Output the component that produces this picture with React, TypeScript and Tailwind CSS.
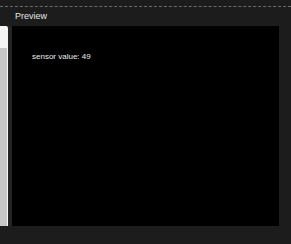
export default function App() {
  return (
    <div
      className="w-[291px] h-[244px] bg-[#1c1c1c] flex flex-col overflow-hidden antialiased"
      style={{ fontFamily: '"Liberation Sans", Arial, sans-serif' }}
    >
      {/* header */}
      <div className="h-[26px] flex flex-col">
        <div className="mt-[6px] border-t border-dashed border-[#6a6a6a]" />
        <div className="pl-[15px] pt-[4px] text-[9px] leading-[11px] text-[#e6e6e6]">Preview</div>
      </div>

      {/* body */}
      <div className="flex-1 flex pb-[18px]">
        <div className="w-[8px] flex flex-col">
          <div className="h-[22px] bg-[#f4f4f4] rounded-tr-[2px]" />
          <div className="flex-1 flex">
            <div className="flex-1 bg-[#c6c6c6]" />
            <div className="w-[1px] bg-[#f4f4f4]" />
          </div>
        </div>
        <div className="w-[4px] bg-[#242424]" />
        <div className="w-[267px] bg-black pl-[20px] pt-[26px]">
          <div className="text-[8px] leading-[9px] text-[#ececec]">sensor value: 49</div>
        </div>
      </div>
    </div>
  );
}
